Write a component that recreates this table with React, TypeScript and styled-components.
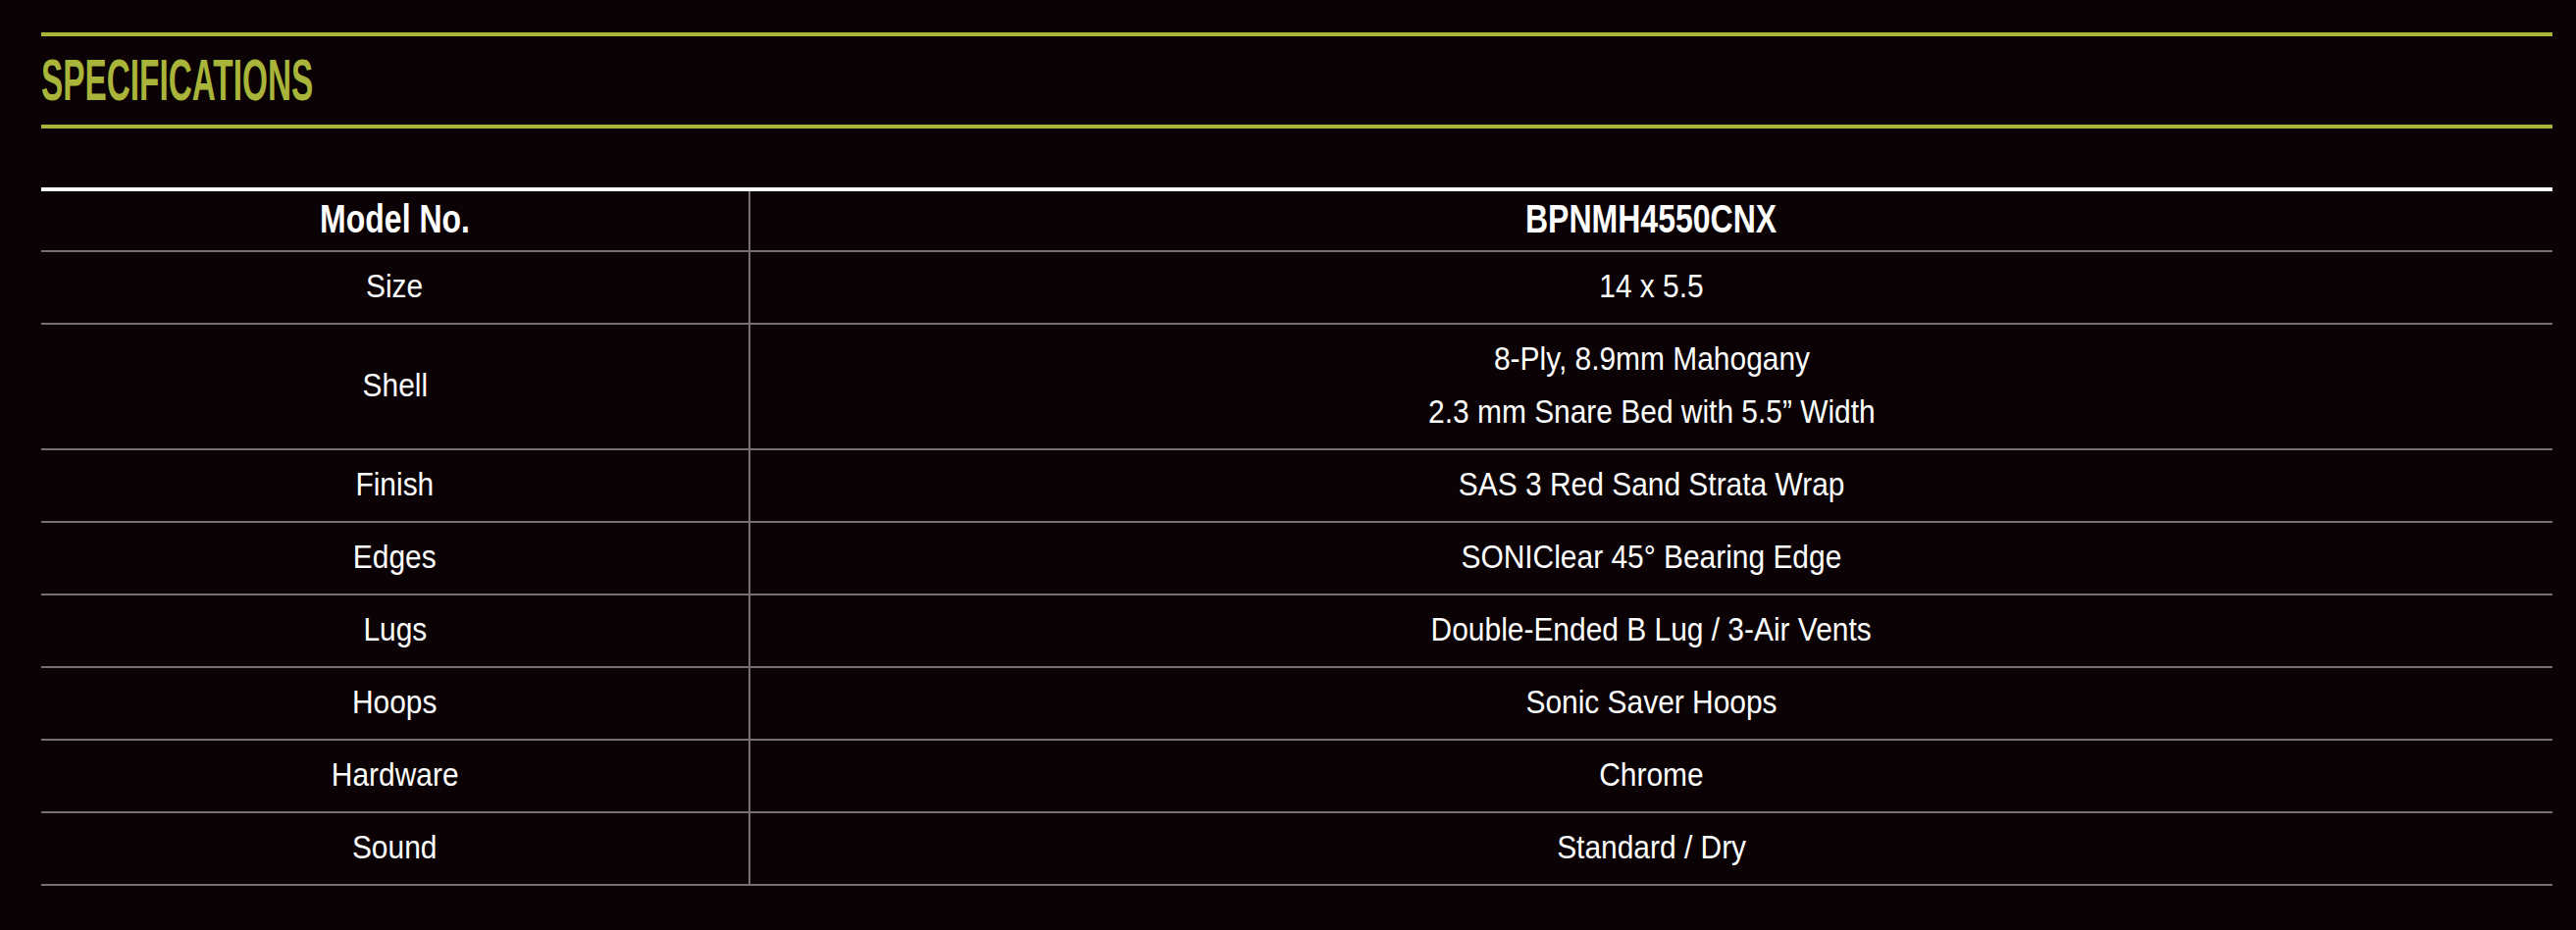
import React from "react";
import styled, { createGlobalStyle } from "styled-components";

const GlobalStyle = createGlobalStyle`
  html, body {
    margin: 0;
    background: #0a0204;
  }
`;

const Page = styled.div`
  width: 2560px;
  padding: 33px 24px 40px 42px;
  font-family: "Liberation Sans", Arial, sans-serif;
  color: #fff;
`;

const TitleBar = styled.div`
  height: 90px;
  display: flex;
  align-items: center;
  border-top: 4px solid #a9b43a;
  border-bottom: 4px solid #a9b43a;
  margin-bottom: 60px;
`;

// the brand face is a condensed grotesque; squeeze Liberation Sans to match
const Title = styled.h2`
  margin: 0;
  font-size: 59px;
  line-height: 58px;
  font-weight: 700;
  color: #a9b43a;
  transform: scaleX(0.565);
  transform-origin: left center;
  white-space: nowrap;
`;

const Table = styled.table`
  width: 100%;
  border-collapse: separate;
  border-spacing: 0;
  border-top: 4px solid #fff;
  table-layout: fixed;
`;

const Cell = styled.td<{ $head?: boolean; $first?: boolean }>`
  text-align: center;
  vertical-align: middle;
  padding: ${({ $head }) => ($head ? "1px 0 5px" : "7px 0 11px")};
  font-size: ${({ $head }) => ($head ? "40px" : "34px")};
  line-height: 54px;
  font-weight: ${({ $head }) => ($head ? 700 : 400)};
  border-bottom: 2px solid #767171;
  border-right: ${({ $first }) => ($first ? "2px solid #767171" : "none")};
  width: ${({ $first }) => ($first ? "721px" : "auto")};
`;

const Text = styled.span<{ $head?: boolean }>`
  display: inline-block;
  white-space: nowrap;
  transform: scaleX(${({ $head }) => ($head ? 0.8 : 0.88)});
  transform-origin: center;
`;

const Line = styled.div`
  display: block;
`;

type Spec = { label: string; value: string[] };

const specs: Spec[] = [
  { label: "Size", value: ["14 x 5.5"] },
  {
    label: "Shell",
    value: ["8-Ply, 8.9mm Mahogany", "2.3 mm Snare Bed with 5.5\u201D Width"],
  },
  { label: "Finish", value: ["SAS 3 Red Sand Strata Wrap"] },
  { label: "Edges", value: ["SONIClear 45\u00B0 Bearing Edge"] },
  { label: "Lugs", value: ["Double-Ended B Lug / 3-Air Vents"] },
  { label: "Hoops", value: ["Sonic Saver Hoops"] },
  { label: "Hardware", value: ["Chrome"] },
  { label: "Sound", value: ["Standard / Dry"] },
];

const App: React.FC = () => {
  return (
    <>
      <GlobalStyle />
      <Page>
        <TitleBar>
          <Title>SPECIFICATIONS</Title>
        </TitleBar>
        <Table>
          <tbody>
            <tr>
              <Cell $head $first>
                <Text $head>Model No.</Text>
              </Cell>
              <Cell $head>
                <Text $head>BPNMH4550CNX</Text>
              </Cell>
            </tr>
            {specs.map((s) => (
              <tr key={s.label}>
                <Cell $first>
                  <Text>{s.label}</Text>
                </Cell>
                <Cell>
                  {s.value.map((v) => (
                    <Line key={v}>
                      <Text>{v}</Text>
                    </Line>
                  ))}
                </Cell>
              </tr>
            ))}
          </tbody>
        </Table>
      </Page>
    </>
  );
};

export default App;
